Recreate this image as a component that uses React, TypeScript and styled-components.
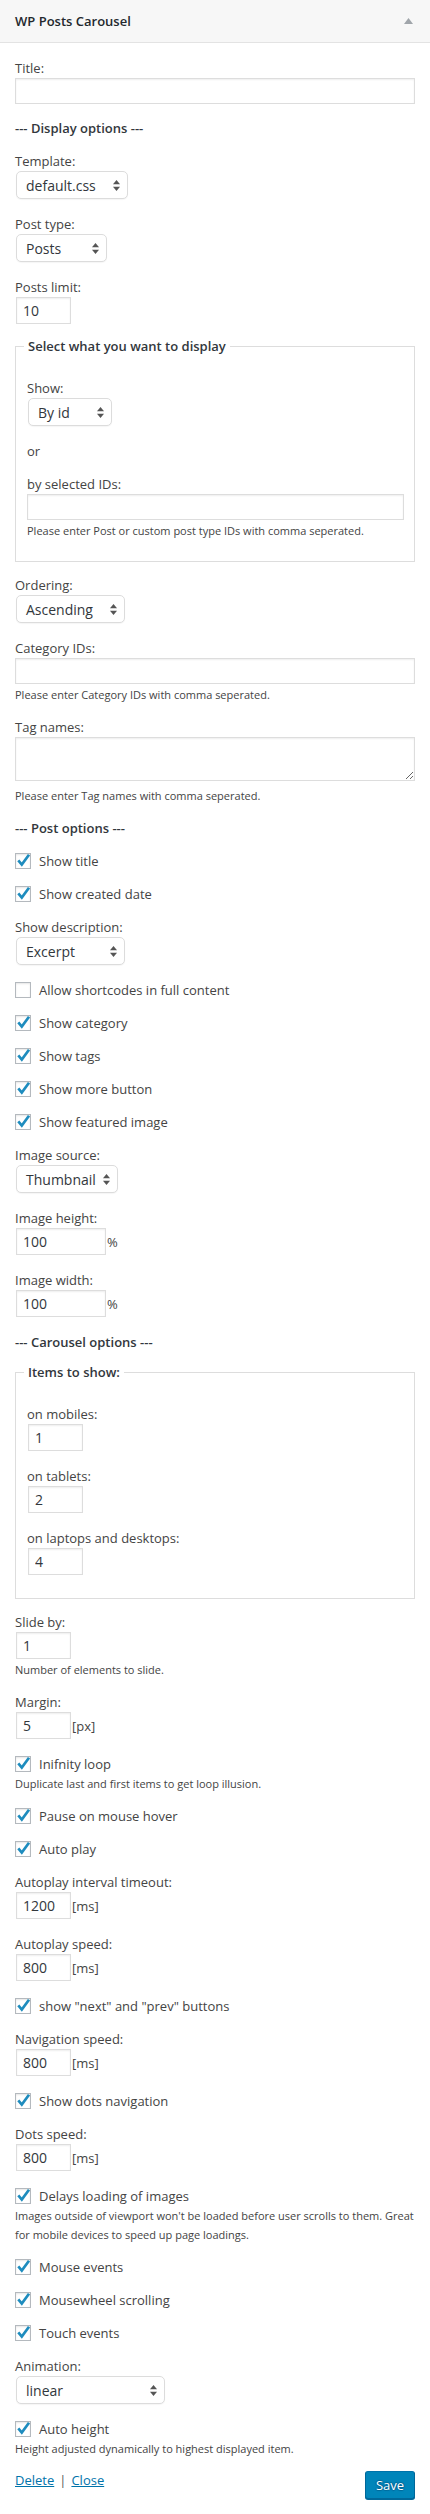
import styled, { createGlobalStyle } from "styled-components";

const GlobalStyle = createGlobalStyle`
  * {
    box-sizing: border-box;
  }
  body {
    margin: 0;
    background: #fff;
    font-family: "Open Sans", "Liberation Sans", sans-serif;
    font-size: 13px;
    color: #444;
  }
`;

function Arrows() {
  return (
    <svg width="7" height="11" viewBox="0 0 7 11">
      <polygon points="3.5,0 7,4.2 0,4.2" fill="#555" />
      <polygon points="0,6.8 7,6.8 3.5,11" fill="#555" />
    </svg>
  );
}

function Dropdown({ value, width }: { value: string; width: number }) {
  return (
    <Row>
      <Select $width={width}>
        <span>{value}</span>
        <Arrows />
      </Select>
    </Row>
  );
}

function Checkbox({ label, checked = true }: { label: string; checked?: boolean }) {
  return (
    <CheckRow>
      <Box>
        {checked && (
          <svg width="14" height="14" viewBox="1 1 14 14">
            <path
              d="M3.3 7.4 L6.8 11.6 L14 1.8"
              fill="none"
              stroke="#1e8cbe"
              strokeWidth="2.7"
            />
          </svg>
        )}
      </Box>
      {label}
    </CheckRow>
  );
}

function NumberField({
  label,
  value,
  width = 55,
  suffix,
}: {
  label: string;
  value: string;
  width?: number;
  suffix?: string;
}) {
  return (
    <Field>
      <Label>{label}</Label>
      <Row>
        <TextInput $width={width} defaultValue={value} />
        {suffix && <Suffix>{suffix}</Suffix>}
      </Row>
    </Field>
  );
}

export default function App() {
  return (
    <>
      <GlobalStyle />
      <Widget>
        <WidgetTop>
          <h3>WP Posts Carousel</h3>
          <svg width="9" height="6" viewBox="0 0 9 6">
            <polygon points="4.5,0 9,6 0,6" fill="#a0a5aa" />
          </svg>
        </WidgetTop>

        <Inside>
          <Field>
            <Label>Title:</Label>
            <Row $after={1}>
              <TextInput />
            </Row>
          </Field>

          <Heading>--- Display options ---</Heading>

          <Field>
            <Label>Template:</Label>
            <Dropdown value="default.css" width={112} />
          </Field>
          <Field>
            <Label>Post type:</Label>
            <Dropdown value="Posts" width={91} />
          </Field>
          <NumberField label="Posts limit:" value="10" />

          <Fieldset>
            <Legend>Select what you want to display</Legend>
            <FieldsetBody>
              <Field>
                <Label>Show:</Label>
                <Dropdown value="By id" width={84} />
              </Field>
              <Text>or</Text>
              <Field>
                <Label>by selected IDs:</Label>
                <Row $after={1}>
                  <TextInput />
                </Row>
                <Help>Please enter Post or custom post type IDs with comma seperated.</Help>
              </Field>
            </FieldsetBody>
          </Fieldset>

          <Field>
            <Label>Ordering:</Label>
            <Dropdown value="Ascending" width={109} />
          </Field>
          <Field>
            <Label>Category IDs:</Label>
            <Row $after={1}>
              <TextInput />
            </Row>
            <Help>Please enter Category IDs with comma seperated.</Help>
          </Field>
          <Field>
            <Label>Tag names:</Label>
            <Row $after={5}>
              <TextArea />
            </Row>
            <Help>Please enter Tag names with comma seperated.</Help>
          </Field>

          <Heading>--- Post options ---</Heading>

          <Checkbox label="Show title" />
          <Checkbox label="Show created date" />
          <Field>
            <Label>Show description:</Label>
            <Dropdown value="Excerpt" width={109} />
          </Field>
          <Checkbox label="Allow shortcodes in full content" checked={false} />
          <Checkbox label="Show category" />
          <Checkbox label="Show tags" />
          <Checkbox label="Show more button" />
          <Checkbox label="Show featured image" />
          <Field>
            <Label>Image source:</Label>
            <Dropdown value="Thumbnail" width={102} />
          </Field>
          <NumberField label="Image height:" value="100" width={90} suffix="%" />
          <NumberField label="Image width:" value="100" width={90} suffix="%" />

          <Heading>--- Carousel options ---</Heading>

          <Fieldset>
            <Legend>Items to show:</Legend>
            <FieldsetBody>
              <NumberField label="on mobiles:" value="1" />
              <NumberField label="on tablets:" value="2" />
              <NumberField label="on laptops and desktops:" value="4" />
            </FieldsetBody>
          </Fieldset>

          <Field>
            <Label>Slide by:</Label>
            <Row $after={1}>
              <TextInput $width={55} defaultValue="1" />
            </Row>
            <Help>Number of elements to slide.</Help>
          </Field>
          <NumberField label="Margin:" value="5" suffix="[px]" />
          <Field>
            <Checkbox label="Inifnity loop" />
            <Help>Duplicate last and first items to get loop illusion.</Help>
          </Field>
          <Checkbox label="Pause on mouse hover" />
          <Checkbox label="Auto play" />
          <NumberField label="Autoplay interval timeout:" value="1200" suffix="[ms]" />
          <NumberField label="Autoplay speed:" value="800" suffix="[ms]" />
          <Checkbox label={'show "next" and "prev" buttons'} />
          <NumberField label="Navigation speed:" value="800" suffix="[ms]" />
          <Checkbox label="Show dots navigation" />
          <NumberField label="Dots speed:" value="800" suffix="[ms]" />
          <Field>
            <Checkbox label="Delays loading of images" />
            <Help>
              Images outside of viewport won't be loaded before user scrolls to them. Great
              for mobile devices to speed up page loadings.
            </Help>
          </Field>
          <Checkbox label="Mouse events" />
          <Checkbox label="Mousewheel scrolling" />
          <Checkbox label="Touch events" />
          <Field>
            <Label>Animation:</Label>
            <Dropdown value="linear" width={149} />
          </Field>
          <Field>
            <Checkbox label="Auto height" />
            <Help>Height adjusted dynamically to highest displayed item.</Help>
          </Field>

          <Footer>
            <Links>
              <a href="#delete">Delete</a>
              <Sep>|</Sep>
              <a href="#close">Close</a>
            </Links>
            <SaveButton type="button">Save</SaveButton>
          </Footer>
        </Inside>
      </Widget>
    </>
  );
}

const Widget = styled.div`
  width: 430px;
  background: #fff;
`;

const WidgetTop = styled.div`
  height: 43px;
  display: flex;
  align-items: center;
  justify-content: space-between;
  padding: 0 17px 0 15px;
  background: #f7f7f7;
  border-bottom: 1px solid #e3e3e3;

  h3 {
    margin: 0;
    font-size: 13px;
    font-weight: 600;
    color: #23282d;
  }
`;

const Inside = styled.div`
  display: flex;
  flex-direction: column;
  gap: 13px;
  padding: 15px 15px 14px;
`;

const Field = styled.div`
  display: flex;
  flex-direction: column;
`;

const Label = styled.label`
  display: block;
  line-height: 20px;
`;

const Text = styled.div`
  line-height: 20px;
`;

const Heading = styled.div`
  font-weight: 600;
  line-height: 20px;
  color: #32373c;
`;

const Row = styled.div<{ $after?: number }>`
  display: flex;
  align-items: center;
  gap: 1px;
  margin-bottom: ${(p) => p.$after ?? 2}px;
`;

const TextInput = styled.input<{ $width?: number }>`
  width: ${(p) => (p.$width ? `${p.$width}px` : "100%")};
  height: ${(p) => (p.$width ? 27 : 26)}px;
  margin: 0 0 0 ${(p) => (p.$width ? 1 : 0)}px;
  padding: 0 6px;
  border: 1px solid #ddd;
  box-shadow: inset 0 1px 2px rgba(0, 0, 0, 0.07);
  background: #fff;
  font-family: "Open Sans", "Liberation Sans", sans-serif;
  font-size: 14px;
  color: #32373c;
  outline: none;
`;

const TextArea = styled.textarea`
  display: block;
  width: 100%;
  height: 44px;
  margin: 0;
  border: 1px solid #ddd;
  box-shadow: inset 0 1px 2px rgba(0, 0, 0, 0.07);
  resize: vertical;
  font-family: "Open Sans", "Liberation Sans", sans-serif;
  font-size: 14px;
  outline: none;
`;

const Suffix = styled.span`
  font-size: 13px;
  line-height: 20px;
  color: #444;
`;

const Select = styled.div<{ $width: number }>`
  width: ${(p) => p.$width}px;
  height: 28px;
  margin-left: 1px;
  display: flex;
  align-items: center;
  justify-content: space-between;
  padding: 0 7px 0 9px;
  border: 1px solid #dcdcdc;
  border-radius: 5px;
  background: #fff;
  box-shadow: 0 1px 1px rgba(0, 0, 0, 0.04);
  font-size: 14px;
  color: #32373c;
`;

const CheckRow = styled.label`
  display: flex;
  align-items: center;
  gap: 8px;
  line-height: 20px;
`;

const Box = styled.span`
  flex: none;
  width: 16px;
  height: 16px;
  display: inline-flex;
  align-items: center;
  justify-content: center;
  border: 1px solid #b4b9be;
  background: #fff;
  box-shadow: inset 0 1px 2px rgba(0, 0, 0, 0.1);

  svg {
    overflow: visible;
  }
`;

const Help = styled.div`
  font-size: 11px;
  line-height: 19px;
  color: #444;
`;

const Fieldset = styled.fieldset`
  margin: 0;
  min-width: 0;
  padding: 25px 10px 21px 11px;
  border: 1px solid #ddd;
`;

const Legend = styled.legend`
  margin-left: -3px;
  padding: 0 4px;
  font-weight: 600;
  line-height: 14px;
  color: #32373c;
`;

const FieldsetBody = styled.div`
  display: flex;
  flex-direction: column;
  gap: 13px;
`;

const Footer = styled.div`
  display: flex;
  justify-content: space-between;
  align-items: flex-start;
`;

const Links = styled.div`
  line-height: 18px;

  a {
    color: #0073aa;
    text-decoration: underline;
  }
`;

const Sep = styled.span`
  margin: 0 5px;
  color: #555;
`;

const SaveButton = styled.button`
  width: 50px;
  height: 28px;
  padding: 0 0 1px;
  border: 1px solid;
  border-color: #0073aa #006799 #006799;
  border-radius: 3px;
  background: #0085ba;
  box-shadow: 0 1px 0 #006799;
  color: #fff;
  font-family: "Open Sans", "Liberation Sans", sans-serif;
  font-size: 13px;
  text-shadow: 0 -1px 1px #006799, 1px 0 1px #006799, 0 1px 1px #006799,
    -1px 0 1px #006799;
`;
